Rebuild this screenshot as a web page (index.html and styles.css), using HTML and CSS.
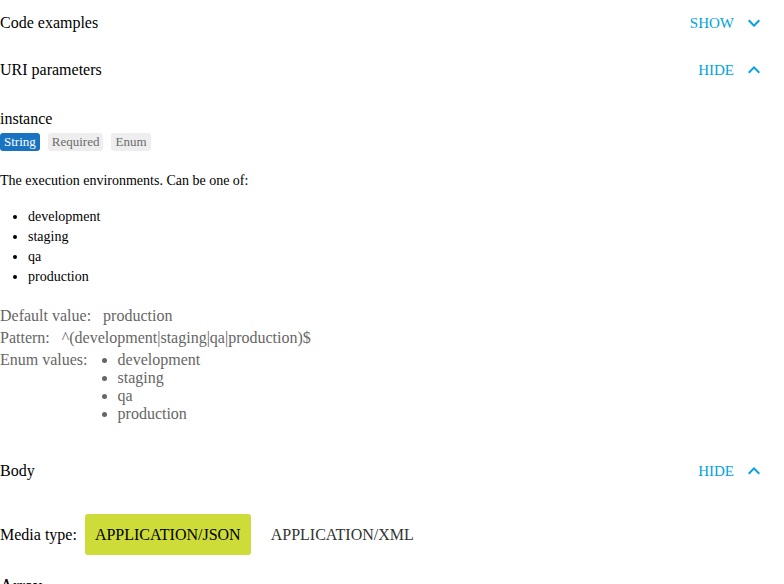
FILE: index.html
```html
<!DOCTYPE html>
<html>
<head>
<meta charset="utf-8">
<link rel="stylesheet" href="styles.css">
</head>
<body>
<div class="page">
  <div class="section-header">
    <span class="section-title">Code examples</span>
    <span class="toggle">SHOW
      <svg class="chev" viewBox="0 0 24 24" width="24" height="24"><path d="M16.59 8.59L12 13.17 7.41 8.59 6 10l6 6 6-6z"/></svg>
    </span>
  </div>
  <div class="section-header">
    <span class="section-title">URI parameters</span>
    <span class="toggle">HIDE
      <svg class="chev" viewBox="0 0 24 24" width="24" height="24"><path d="M12 8l-6 6 1.41 1.41L12 10.83l4.59 4.58L18 14z"/></svg>
    </span>
  </div>

  <div class="param">
    <div class="param-name">instance</div>
    <div class="badges">
      <span class="badge badge-type">String</span>
      <span class="badge">Required</span>
      <span class="badge">Enum</span>
    </div>
    <p class="desc">The execution environments. Can be one of:</p>
    <ul class="desc-list">
      <li>development</li>
      <li>staging</li>
      <li>qa</li>
      <li>production</li>
    </ul>
    <div class="props">
      <div class="prop"><span class="prop-label">Default value:</span><span>production</span></div>
      <div class="prop"><span class="prop-label">Pattern:</span><span>^(development|staging|qa|production)$</span></div>
      <div class="prop"><span class="prop-label">Enum values:</span>
        <ul class="enum-list">
          <li>development</li>
          <li>staging</li>
          <li>qa</li>
          <li>production</li>
        </ul>
      </div>
    </div>
  </div>

  <div class="section-header body-header">
    <span class="section-title">Body</span>
    <span class="toggle">HIDE
      <svg class="chev" viewBox="0 0 24 24" width="24" height="24"><path d="M12 8l-6 6 1.41 1.41L12 10.83l4.59 4.58L18 14z"/></svg>
    </span>
  </div>

  <div class="media">
    <span class="media-label">Media type:</span>
    <span class="media-btn active">APPLICATION/JSON</span>
    <span class="media-btn">APPLICATION/XML</span>
  </div>

  <div class="type-title">Array</div>
</div>
</body>
</html>
```

FILE: styles.css
```css
html, body {
  margin: 0;
  padding: 0;
  background: #fff;
}
body {
  font-family: "Liberation Serif", "Times New Roman", serif;
  color: #000;
  font-size: 16px;
}
.page {
  width: 784px;
  overflow: hidden;
}
.section-header {
  display: flex;
  align-items: center;
  justify-content: space-between;
  height: 46px;
  padding-right: 18px;
}
.section-header + .section-header {
  margin-top: 1px;
}
.section-title {
  font-size: 16px;
}
.toggle {
  display: flex;
  align-items: center;
  gap: 8px;
  color: #00a2df;
  font-size: 15px;
}
.chev {
  fill: #00a2df;
  display: block;
}
.param {
  padding-top: 17px;
}
.param-name {
  font-size: 16px;
  line-height: 18px;
}
.badges {
  display: flex;
  gap: 8px;
  margin-top: 5px;
}
.badge {
  font-size: 13px;
  line-height: 18px;
  padding: 0 4px;
  border-radius: 3px;
  background: #eeeeee;
  color: #6b6b6b;
}
.badge-type {
  background: #1a73c0;
  color: #fff;
}
.desc {
  font-size: 14px;
  line-height: 16px;
  margin: 22px 0 0 0;
}
.desc-list {
  margin: 18px 0 0 0;
  padding-left: 28px;
  font-size: 14px;
  line-height: 20px;
}
.props {
  margin-top: 20px;
  color: #666;
  font-size: 16px;
  line-height: 18px;
  display: flex;
  flex-direction: column;
  gap: 4px;
}
.prop {
  display: flex;
  gap: 12px;
}
.enum-list {
  margin: 0;
  padding-left: 18px;
}
.body-header {
  margin-top: 25px;
}
.media {
  display: flex;
  align-items: center;
  gap: 8px;
  margin-top: 20px;
}
.media-label {
  font-size: 16px;
}
.media-btn {
  font-size: 16px;
  line-height: 41px;
  padding: 0 10px;
  border-radius: 3px;
  color: #333;
}
.media-btn + .media-btn {
  margin-left: 2px;
}
.media-btn.active {
  background: #cddc39;
  color: #000;
}
.type-title {
  margin-top: 21px;
  font-size: 18px;
}
```
